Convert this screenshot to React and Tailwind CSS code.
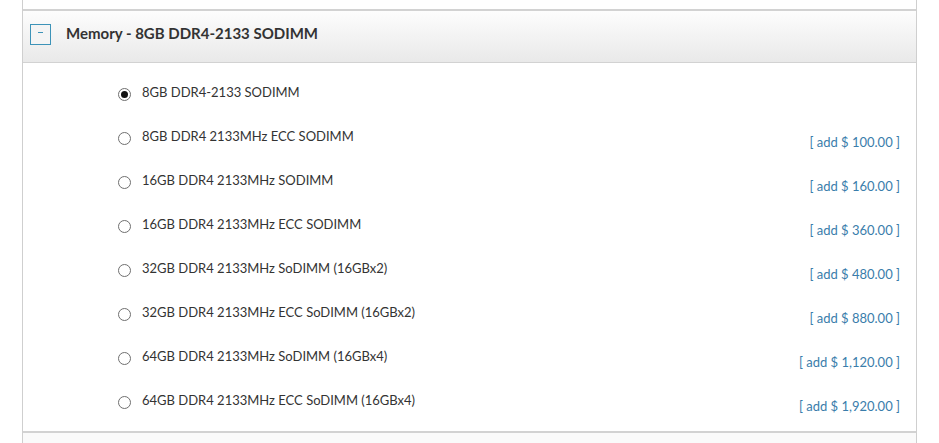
export default function App() {
  const rows = [
    { label: "8GB DDR4-2133 SODIMM", price: null, checked: true },
    { label: "8GB DDR4 2133MHz ECC SODIMM", price: "[ add $ 100.00 ]" },
    { label: "16GB DDR4 2133MHz SODIMM", price: "[ add $ 160.00 ]" },
    { label: "16GB DDR4 2133MHz ECC SODIMM", price: "[ add $ 360.00 ]" },
    { label: "32GB DDR4 2133MHz SoDIMM (16GBx2)", price: "[ add $ 480.00 ]" },
    { label: "32GB DDR4 2133MHz ECC SoDIMM (16GBx2)", price: "[ add $ 880.00 ]" },
    { label: "64GB DDR4 2133MHz SoDIMM (16GBx4)", price: "[ add $ 1,120.00 ]" },
    { label: "64GB DDR4 2133MHz ECC SoDIMM (16GBx4)", price: "[ add $ 1,920.00 ]" },
  ];
  return (
    <div className="w-[939px] h-[443px] bg-white overflow-hidden" style={{ fontFamily: "Lato, 'Open Sans', sans-serif" }}>
      <div className="ml-[22px] w-[895px] h-[443px] border-x border-[#cfcfcf] flex flex-col">
        <div className="h-[9px]" />
        <div className="border-t-2 border-b border-[#d2d2d2] h-[54px] bg-gradient-to-b from-[#fdfdfd] to-[#e9e9e9] flex items-center pl-[7px] pb-[5px]">
          <div className="w-[21px] h-[21px] border border-[#3d93b8] bg-[#f4f4f4] flex items-center justify-center">
            <div className="w-[5px] h-[1px] bg-[#3d93b8] -mt-[3px]" />
          </div>
          <div className="ml-[15px] text-[15px] font-bold text-[#333] -mt-[2px]">Memory - 8GB DDR4-2133 SODIMM</div>
        </div>
        <div className="h-[368px] pt-[19px] pl-[95px] pr-[16px]">
          {rows.map((r, i) => (
            <div key={i} className="h-[44px] flex items-start">
              <div className="flex items-start">
                <div className="mt-[6px] w-[13px] h-[13px] rounded-full border border-[#6f6f6f] bg-white flex items-center justify-center">
                  {r.checked && <div className="w-[7px] h-[7px] rounded-full bg-[#111]" />}
                </div>
                <div className="ml-[11px] text-[13px] leading-[20px] text-[#333]">{r.label}</div>
              </div>
              {r.price && (
                <div className="ml-auto mt-[6px] text-[13px] leading-[20px] text-[#3a7dab]">{r.price}</div>
              )}
            </div>
          ))}
        </div>
        <div className="border-t-2 border-[#d2d2d2] flex-1 bg-[#fafafa]" />
      </div>
    </div>
  );
}
